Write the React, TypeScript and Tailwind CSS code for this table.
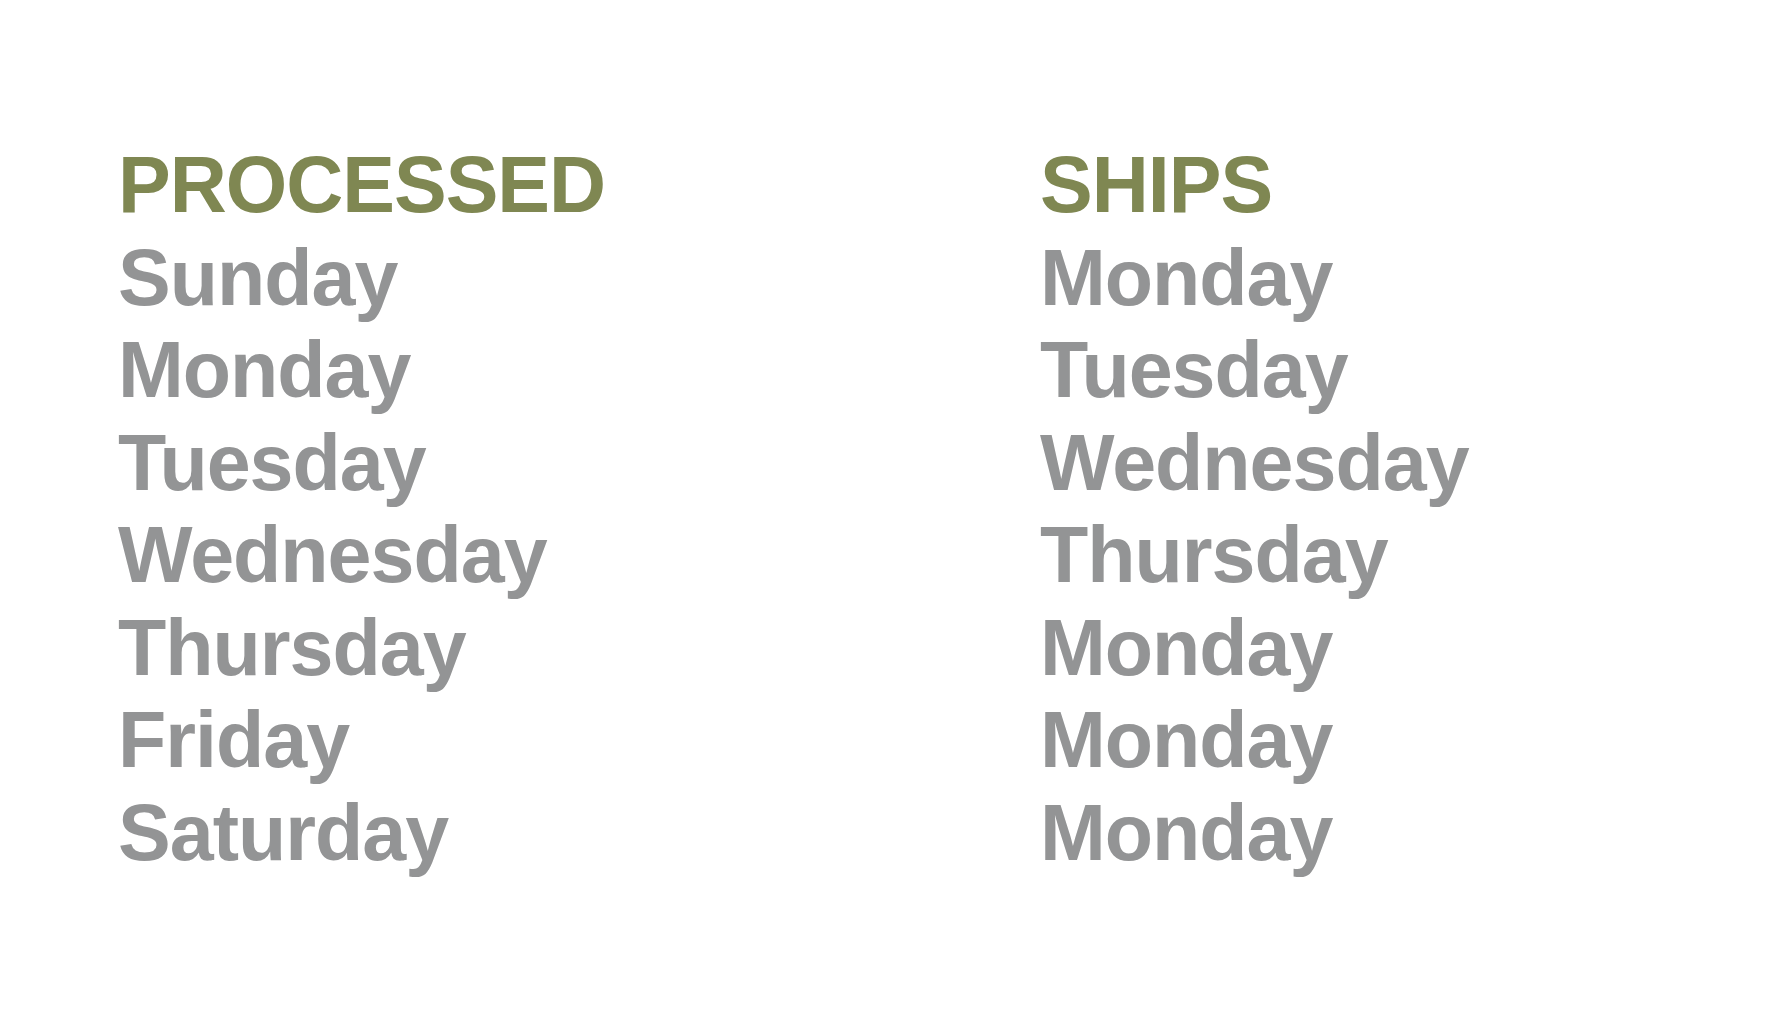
const processed = ["Sunday", "Monday", "Tuesday", "Wednesday", "Thursday", "Friday", "Saturday"];
const ships = ["Monday", "Tuesday", "Wednesday", "Thursday", "Monday", "Monday", "Monday"];

function Column({ title, days }: { title: string; days: string[] }) {
  return (
    <div className="flex flex-col">
      <div className="text-[#7f8752]">{title}</div>
      {days.map((d, i) => (
        <div key={i} className="text-[#939495]">
          {d}
        </div>
      ))}
    </div>
  );
}

export default function App() {
  return (
    <div className="h-[1034px] w-[1766px] bg-white pl-[118px] pt-[139px] font-['Liberation_Sans',Arial,sans-serif] text-[79px] font-bold leading-[92.5px] tracking-[-1px]">
      <div className="flex">
        <div className="w-[922px]">
          <Column title="PROCESSED" days={processed} />
        </div>
        <Column title="SHIPS" days={ships} />
      </div>
    </div>
  );
}
